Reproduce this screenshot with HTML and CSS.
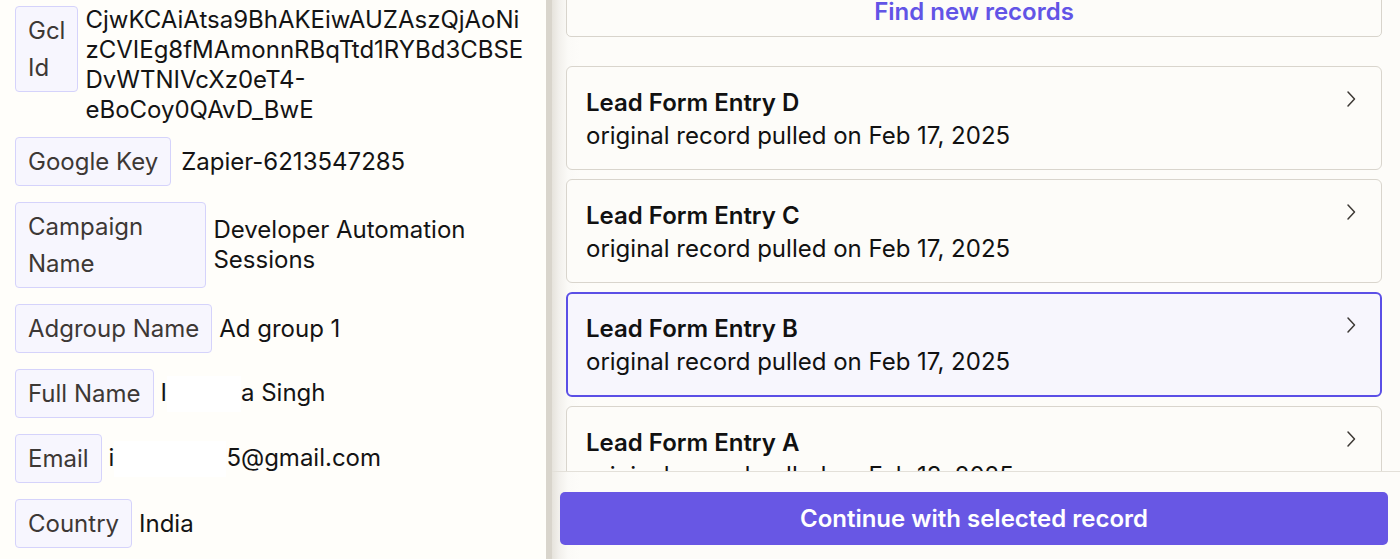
FILE: index.html
```html
<!DOCTYPE html>
<html lang="en">
<head>
<meta charset="utf-8">
<title>Select record</title>
<link rel="stylesheet" href="styles.css">
</head>
<body>
<div class="app">
  <section class="fields">
    <div class="row top">
      <span class="label label-narrow">Gcl Id</span>
      <span class="value value-long">CjwKCAiAtsa9BhAKEiwAUZAszQjAoNi<br>zCVIEg8fMAmonnRBqTtd1RYBd3CBSE<br>DvWTNIVcXz0eT4-<br>eBoCoy0QAvD_BwE</span>
    </div>
    <div class="row">
      <span class="label">Google Key</span>
      <span class="value value-pad">Zapier-6213547285</span>
    </div>
    <div class="row">
      <span class="label">Campaign Name</span>
      <span class="value">Developer Automation Sessions</span>
    </div>
    <div class="row">
      <span class="label">Adgroup Name</span>
      <span class="value">Ad group 1</span>
    </div>
    <div class="row">
      <span class="label">Full Name</span>
      <span class="value">I<span class="redact redact-name"></span>a Singh</span>
    </div>
    <div class="row">
      <span class="label">Email</span>
      <span class="value">i<span class="redact redact-mail"></span>5@gmail.com</span>
    </div>
    <div class="row">
      <span class="label">Country</span>
      <span class="value">India</span>
    </div>
  </section>
  <div class="divider"></div>
  <section class="records">
    <div class="list">
      <button class="find">Find new records</button>
      <div class="card">
        <div class="card-text">
          <div class="card-title">Lead Form Entry D</div>
          <div class="card-sub">original record pulled on Feb 17, 2025</div>
        </div>
        <svg class="chev" viewBox="0 0 10 18" width="10" height="18"><path d="M2 2 L8.5 9 L2 16" /></svg>
      </div>
      <div class="card">
        <div class="card-text">
          <div class="card-title">Lead Form Entry C</div>
          <div class="card-sub">original record pulled on Feb 17, 2025</div>
        </div>
        <svg class="chev" viewBox="0 0 10 18" width="10" height="18"><path d="M2 2 L8.5 9 L2 16" /></svg>
      </div>
      <div class="card selected">
        <div class="card-text">
          <div class="card-title">Lead Form Entry B</div>
          <div class="card-sub">original record pulled on Feb 17, 2025</div>
        </div>
        <svg class="chev" viewBox="0 0 10 18" width="10" height="18"><path d="M2 2 L8.5 9 L2 16" /></svg>
      </div>
      <div class="card">
        <div class="card-text">
          <div class="card-title">Lead Form Entry A</div>
          <div class="card-sub">original record pulled on Feb 13, 2025</div>
        </div>
        <svg class="chev" viewBox="0 0 10 18" width="10" height="18"><path d="M2 2 L8.5 9 L2 16" /></svg>
      </div>
    </div>
    <div class="footer">
      <button class="continue">Continue with selected record</button>
    </div>
  </section>
</div>
</body>
</html>
```

FILE: styles.css
```css
* { box-sizing: border-box; }

html, body {
  margin: 0;
  padding: 0;
}

body {
  background: #fffdf9;
  font-family: Inter, "Noto Sans", "Liberation Sans", sans-serif;
  color: #141414;
}

.app {
  display: flex;
  height: 559px;
  overflow: hidden;
}

/* Left: field list */
.fields {
  width: 546px;
  flex-shrink: 0;
  padding: 5px 16px 0 15px;
  display: flex;
  flex-direction: column;
  gap: 16px;
  background: #fffefa;
}

.row {
  display: flex;
  align-items: center;
  gap: 7px;
}

.row.top {
  align-items: flex-start;
  margin-bottom: -4px;
}

.label {
  border: 1px solid #d5d3fb;
  background: #f7f6fe;
  border-radius: 4px;
  padding: 5px 12px;
  font-size: 24px;
  line-height: 37px;
  color: #3d3835;
}

.label-narrow {
  width: min-content;
  flex-shrink: 0;
  margin-top: 1px;
}

.value {
  font-size: 24px;
  line-height: 30px;
  color: #141414;
  min-width: 0;
  overflow-wrap: anywhere;
}

.value-long {
  flex: 1;
  white-space: nowrap;
}

.value-pad {
  padding-left: 3px;
}

.redact {
  display: inline-block;
  background: #ffffff;
  height: 36px;
  vertical-align: middle;
}

.redact-name { width: 74px; }
.redact-mail { width: 112px; }

/* Divider */
.divider {
  width: 6px;
  flex-shrink: 0;
  background: #d9d5cc;
}

/* Right: records */
.records {
  flex: 1;
  display: flex;
  flex-direction: column;
  min-width: 0;
  background: linear-gradient(90deg, #e6e3dc 0, #f2f0ec 7px, #fbfaf7 16px, #fdfcf9 28px);
}

.list {
  flex: 1;
  min-height: 0;
  overflow: hidden;
  padding: 0 18px 0 14px;
  display: flex;
  flex-direction: column;
  gap: 9px;
}

.find {
  flex-shrink: 0;
  margin-top: -14px;
  margin-bottom: 20px;
  height: 51px;
  border: 1px solid #d8d4cc;
  border-radius: 5px;
  background: #fdfcf9;
  color: #6254e6;
  font-family: inherit;
  font-size: 24px;
  font-weight: 600;
  padding: 0;
}

.card {
  flex-shrink: 0;
  display: flex;
  justify-content: space-between;
  align-items: flex-start;
  border: 1px solid #d9d5cd;
  border-radius: 6px;
  background: #fdfcf9;
  padding: 19px 25px 17px 19px;
}

.card.selected {
  border: 2px solid #5b4fe6;
  background: #f7f6fd;
  padding: 18px 24px 17px 18px;
}

.card-title {
  font-size: 24px;
  font-weight: 600;
  line-height: 34px;
  color: #111;
}

.card-sub {
  font-size: 24px;
  line-height: 32px;
  color: #111;
}

.chev {
  margin-top: 4px;
  fill: none;
  stroke: #3d3935;
  stroke-width: 1.5;
  stroke-linecap: round;
  stroke-linejoin: round;
}

.footer {
  flex-shrink: 0;
  border-top: 1px solid #e3e0d9;
  padding: 20px 12px 14px 8px;
}

.continue {
  display: block;
  width: 100%;
  height: 53px;
  border: none;
  border-radius: 5px;
  background: #6857e4;
  color: #ffffff;
  font-family: inherit;
  font-size: 24px;
  font-weight: 600;
}
```
